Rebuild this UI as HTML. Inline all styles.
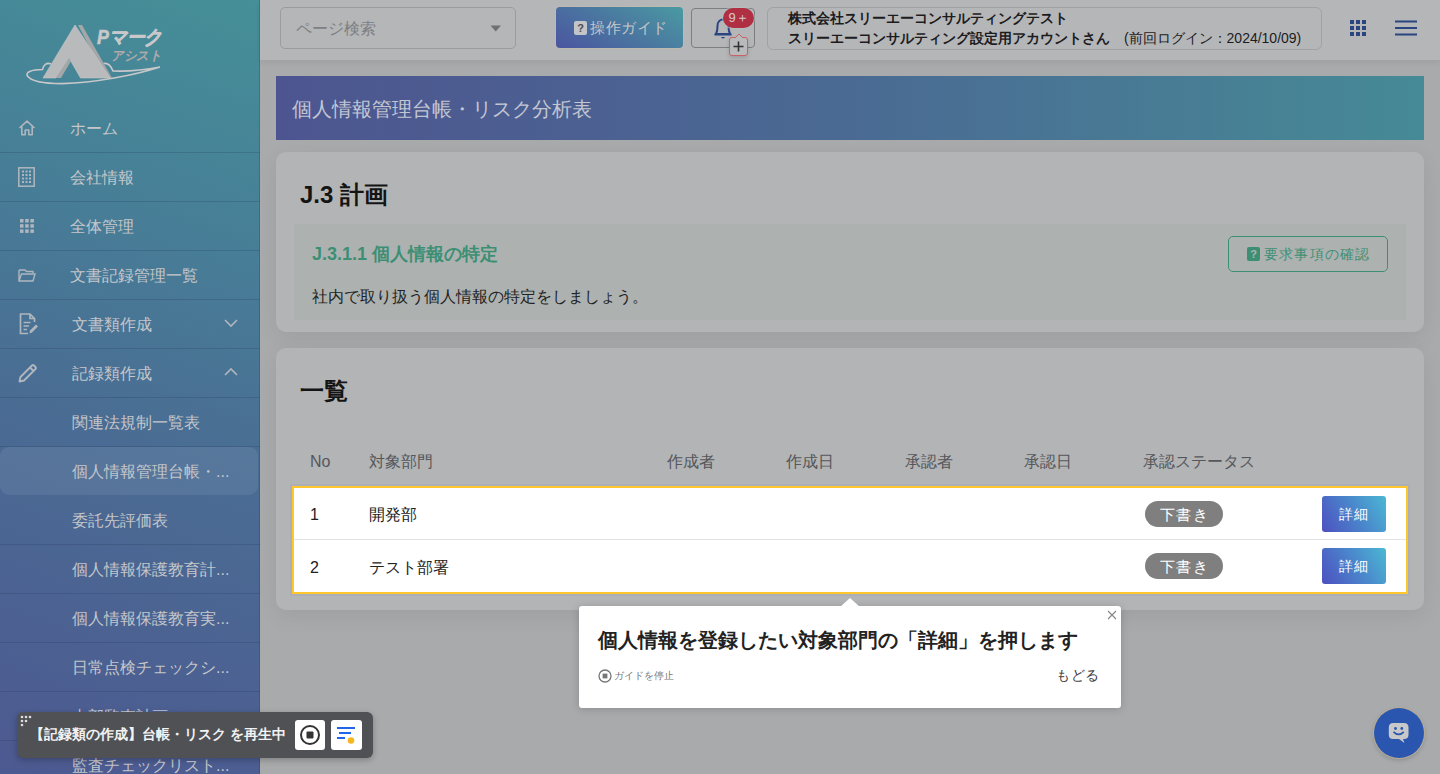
<!DOCTYPE html>
<html lang="ja"><head><meta charset="utf-8">
<style>
*{box-sizing:border-box;margin:0;padding:0}
html,body{width:1440px;height:774px;overflow:hidden}
body{font-family:"Liberation Sans",sans-serif;background:#a9aaac;position:relative;color:#222}
.abs{position:absolute}
#side{left:0;top:0;width:260px;height:774px;background:linear-gradient(200deg,#458f97 0%,#477f97 28%,#4a6c93 56%,#4d5991 100%);overflow:hidden;box-shadow:inset -1px 0 0 rgba(30,50,90,.25)}
.mi{position:absolute;left:0;width:260px;height:50px;border-bottom:1px solid rgba(30,50,80,.22);color:#c4c6ca;font-size:16px;line-height:49px}
.mi .t{position:absolute;left:70px;top:1px}
.mi .ic{position:absolute;left:18px;top:16px;width:18px;height:18px}
#hdr{left:260px;top:0;width:1180px;height:61px;background:#b5b6b8;border-bottom:1px solid #a2a3a5;box-shadow:0 2px 5px rgba(0,0,0,.06);z-index:2}
.card{position:absolute;left:276px;width:1148px;background:#b3b4b6;border-radius:10px;box-shadow:0 6px 22px rgba(0,0,0,.07)}
.th{top:452px;font-size:16px;color:#55575a;line-height:20px}
.td{font-size:16px;color:#222;line-height:20px}
.badge{width:78px;height:26px;border-radius:13px;background:#7f7f7f;color:#fff;font-size:15px;line-height:28px;text-align:center;letter-spacing:1.5px;text-indent:1px}
.btn{width:64px;height:36px;border-radius:3px;background:linear-gradient(60deg,#4d50c0 0%,#4a88cc 55%,#4bb8d2 100%);color:#fff;font-size:14px;line-height:36px;text-align:center;letter-spacing:1px}
</style></head><body>

<div id="side" class="abs">
  <!-- logo -->
  <svg class="abs" style="left:0;top:0" width="260" height="100" viewBox="0 0 260 100">
    <path d="M51 64 C47 62 43 65 42.5 69.5 C31 69.5 25 72.5 27.5 76 C31 81 45 83.6 62 83.6 C95 83 135 75 160 67 C145 70 125 71.5 113 71 C111 66 108 62.5 103.5 63.5" fill="none" stroke="#c8c8ca" stroke-width="1.6"/>
    <polygon points="78,25 82,25 112,78 106,78" fill="#a4a6a8"/>
    <polygon points="75,25 110,78 80.5,78 69,58 56,78 43,78" fill="#b9babc" stroke="#c6c7c9" stroke-width="0.6"/>
    <polygon points="56,78 69,58 71,61 61,78" fill="#a4a6a8"/>
    <text x="97" y="44" font-family="Liberation Sans" font-size="20" font-weight="bold" font-style="italic" fill="#c8c8ca" textLength="65" lengthAdjust="spacingAndGlyphs" stroke="#c8c8ca" stroke-width="0.6">Pマーク</text>
    <text x="111" y="59.5" font-family="Liberation Sans" font-size="13" font-weight="bold" font-style="italic" fill="#b2aaaa" textLength="50" lengthAdjust="spacingAndGlyphs">アシスト</text>
  </svg>

  <div class="mi" style="top:103px"><svg class="abs" style="left:18px;top:17px" width="18" height="16" viewBox="0 0 18 16"><path d="M1.5 8 L9 1.2 L16.5 8 M3.8 6 V14.8 H7.2 V10 H10.8 V14.8 H14.2 V6" fill="none" stroke="#b0b6be" stroke-width="1.6" stroke-linejoin="round"/></svg><span class="t">ホーム</span></div>
  <div class="mi" style="top:152px"><svg class="abs" style="left:18px;top:15px" width="17" height="20" viewBox="0 0 17 20"><rect x="0.8" y="0.8" width="15.4" height="18.4" fill="none" stroke="#b0b6be" stroke-width="1.5"/><g fill="#b0b6be"><rect x="4" y="3.5" width="2" height="2"/><rect x="7.5" y="3.5" width="2" height="2"/><rect x="11" y="3.5" width="2" height="2"/><rect x="4" y="7" width="2" height="2"/><rect x="7.5" y="7" width="2" height="2"/><rect x="11" y="7" width="2" height="2"/><rect x="4" y="10.5" width="2" height="2"/><rect x="7.5" y="10.5" width="2" height="2"/><rect x="11" y="10.5" width="2" height="2"/><rect x="4" y="14" width="2" height="2"/><rect x="7.5" y="14" width="2" height="2"/><rect x="11" y="14" width="2" height="2"/></g></svg><span class="t">会社情報</span></div>
  <div class="mi" style="top:201px"><svg class="ic" viewBox="0 0 18 18"><g fill="#b0b6be"><rect x="2" y="2" width="3.5" height="3.5"/><rect x="7.2" y="2" width="3.5" height="3.5"/><rect x="12.4" y="2" width="3.5" height="3.5"/><rect x="2" y="7.2" width="3.5" height="3.5"/><rect x="7.2" y="7.2" width="3.5" height="3.5"/><rect x="12.4" y="7.2" width="3.5" height="3.5"/><rect x="2" y="12.4" width="3.5" height="3.5"/><rect x="7.2" y="12.4" width="3.5" height="3.5"/><rect x="12.4" y="12.4" width="3.5" height="3.5"/></g></svg><span class="t">全体管理</span></div>
  <div class="mi" style="top:250px"><svg class="ic" viewBox="0 0 18 18"><path d="M1 4 H7 L8.5 5.5 H15 V7 M1 4 V15 H15 L17 8 H3.5 L1 15" fill="none" stroke="#b0b6be" stroke-width="1.4"/></svg><span class="t">文書記録管理一覧</span></div>
  <div class="mi" style="top:299px"><svg class="abs" style="left:19px;top:14px" width="20" height="22" viewBox="0 0 20 22"><path d="M9 20.5 H1.5 V1 H11 L15.5 5.5 V9 M11 1 V5.5 H15.5" fill="none" stroke="#b0b6be" stroke-width="1.7" stroke-linejoin="round"/><path d="M4.5 9.5 H11.5 M4.5 13 H10 M4.5 16.5 H8" stroke="#b0b6be" stroke-width="1.7"/><path d="M10.5 20.5 L11 17.5 L17 11.5 L19 13.5 L13 19.5 Z" fill="#b0b6be"/></svg><span class="t" style="left:72px">文書類作成</span><svg class="abs" style="left:224px;top:19px" width="14" height="10" viewBox="0 0 14 10"><path d="M1 2 L7 8 L13 2" fill="none" stroke="#b0b6be" stroke-width="1.6"/></svg></div>
  <div class="mi" style="top:348px"><svg class="abs" style="left:18px;top:15px" width="20" height="20" viewBox="0 0 20 20"><path d="M1.5 18.5 L2.5 14 L14 2.5 Q15 1.5 16 2.5 L17.5 4 Q18.5 5 17.5 6 L6 17.5 Z M12 4.5 L15.5 8" fill="none" stroke="#b0b6be" stroke-width="1.9" stroke-linejoin="round"/></svg><span class="t" style="left:72px">記録類作成</span><svg class="abs" style="left:224px;top:19px" width="14" height="10" viewBox="0 0 14 10"><path d="M1 8 L7 2 L13 8" fill="none" stroke="#b0b6be" stroke-width="1.6"/></svg></div>
  <div class="mi" style="top:397px"><span class="t" style="left:72px">関連法規制一覧表</span></div>
  <div class="abs" style="left:0;top:447px;width:258px;height:48px;border-radius:9px;background:rgba(255,255,255,.075)"></div>
  <div class="mi" style="top:446px;border-bottom:none"><span class="t" style="left:72px">個人情報管理台帳・...</span></div>
  <div class="mi" style="top:495px"><span class="t" style="left:72px">委託先評価表</span></div>
  <div class="mi" style="top:544px"><span class="t" style="left:72px">個人情報保護教育計...</span></div>
  <div class="mi" style="top:593px"><span class="t" style="left:72px">個人情報保護教育実...</span></div>
  <div class="mi" style="top:642px"><span class="t" style="left:72px">日常点検チェックシ...</span></div>
  <div class="mi" style="top:691px"><span class="t" style="left:72px">内部監査計画</span></div>
  <div class="mi" style="top:740px;border-bottom:none"><span class="t" style="left:72px">監査チェックリスト...</span></div>
</div>

<div id="hdr" class="abs">
  <div class="abs" style="left:20px;top:7px;width:236px;height:42px;border:1px solid #9a9c9f;border-radius:5px"></div>
  <div class="abs" style="left:36px;top:19px;font-size:16px;color:#7d7f83;line-height:20px">ページ検索</div>
  <svg class="abs" style="left:230px;top:25px" width="12" height="7" viewBox="0 0 12 7"><path d="M0.5 0.5 H11 L5.75 6.5Z" fill="#6e7074"/></svg>

  <div class="abs" style="left:296px;top:7px;width:127px;height:41px;border-radius:4px;background:linear-gradient(30deg,#4b55a0 0%,#4a7aa0 55%,#4a9aa2 100%);box-shadow:0 0 0 1px rgba(200,190,170,.5)"></div>
  <div class="abs" style="left:314px;top:21px;width:13px;height:14px;background:#c4c5c8;border-radius:2px;color:#4b4d52;font-size:11px;font-weight:bold;line-height:14px;text-align:center">?</div>
  <div class="abs" style="left:330px;top:18px;font-size:15px;color:#c4c6ca;letter-spacing:.6px;line-height:20px">操作ガイド</div>

  <div class="abs" style="left:431px;top:8px;width:64px;height:40px;border:1px solid #7c7e82;border-radius:4px"></div>
  <svg class="abs" style="left:453px;top:17px" width="20" height="23" viewBox="0 0 20 23"><path d="M3 17 C4 15 4.5 13 4.5 9 C4.5 5 7 2.5 10 2.5 C13 2.5 15.5 5 15.5 9 C15.5 13 16 15 17 17 Z" fill="none" stroke="#2a4682" stroke-width="2"/><path d="M1.5 17.5 H18.5" stroke="#2a4682" stroke-width="2"/><path d="M8 20 Q10 23 12 20" fill="#2a4682"/></svg>
  <div class="abs" style="left:463px;top:8px;width:31px;height:20px;border-radius:10px;background:#b02f42;color:#d8c8cc;font-size:13px;line-height:20px;text-align:center;box-shadow:0 0 0 1px rgba(180,200,200,.5)">9＋</div>
  <div class="abs" style="left:469px;top:37px;width:19px;height:19px;border:1px solid #c9606a;border-radius:3px;background:#b9babc;box-shadow:0 2px 4px rgba(0,0,0,.15)"></div><svg class="abs" style="left:474.5px;top:33px" width="8" height="6" viewBox="0 0 8 6"><path d="M0 5 L4 1 L8 5" fill="#b9babc" stroke="#c9606a" stroke-width="1"/><rect x="0.8" y="4.6" width="6.4" height="1.6" fill="#b9babc"/></svg>
  <svg class="abs" style="left:472px;top:40px" width="13" height="13" viewBox="0 0 13 13"><path d="M6.5 1.5 V11.5 M1.5 6.5 H11.5" stroke="#333" stroke-width="1.6"/></svg>

  <div class="abs" style="left:507px;top:7px;width:555px;height:43px;border:1px solid #a0a2a5;border-radius:6px"></div>
  <div class="abs" style="left:528px;top:8px;font-size:14px;font-weight:bold;color:#1c1c1e;line-height:20px;white-space:nowrap">株式会社スリーエーコンサルティングテスト<br>スリーエーコンサルティング設定用アカウントさん <span style="font-weight:normal;font-size:14px;margin-left:10px">(前回ログイン：2024/10/09)</span></div>

  <svg class="abs" style="left:1090px;top:20px" width="16" height="16" viewBox="0 0 16 16"><g fill="#2b4580"><rect x="0" y="0" width="4" height="4"/><rect x="6" y="0" width="4" height="4"/><rect x="12" y="0" width="4" height="4"/><rect x="0" y="6" width="4" height="4"/><rect x="6" y="6" width="4" height="4"/><rect x="12" y="6" width="4" height="4"/><rect x="0" y="12" width="4" height="4"/><rect x="6" y="12" width="4" height="4"/><rect x="12" y="12" width="4" height="4"/></g></svg>
  <svg class="abs" style="left:1135px;top:20px" width="22" height="16" viewBox="0 0 22 16"><g stroke="#2b4580" stroke-width="2.2"><path d="M0 1.5H22M0 8H22M0 14.5H22"/></g></svg>
</div>

<div class="abs" style="left:276px;top:76px;width:1148px;height:64px;background:linear-gradient(90deg,#4d5590 0%,#4a6a93 50%,#468a96 100%)"></div>
<div class="abs" style="left:292px;top:97px;font-size:20px;color:#c2c6d2;line-height:24px;letter-spacing:0px">個人情報管理台帳・リスク分析表</div>

<div class="card" style="top:152px;height:180px"></div>
<div class="abs" style="left:300px;top:181px;font-size:24px;font-weight:bold;color:#141414;line-height:28px">J.3 計画</div>
<div class="abs" style="left:294px;top:224px;width:1112px;height:96px;background:#adb2b1"></div>
<div class="abs" style="left:312px;top:243px;font-size:18px;font-weight:bold;color:#3d8f74;line-height:22px">J.3.1.1 個人情報の特定</div>
<div class="abs" style="left:312px;top:287px;font-size:16px;color:#222;line-height:20px">社内で取り扱う個人情報の特定をしましょう。</div>
<div class="abs" style="left:1228px;top:236px;width:160px;height:36px;border:1.5px solid #3d8f74;border-radius:5px"></div>
<div class="abs" style="left:1247px;top:247px;width:13px;height:14px;background:#3d8f74;border-radius:2px;color:#b0b4b3;font-size:11px;font-weight:bold;line-height:14px;text-align:center">?</div>
<div class="abs" style="left:1264px;top:245px;font-size:14px;color:#3d8f74;letter-spacing:1.2px;line-height:18px">要求事項の確認</div>

<div class="card" style="top:348px;height:262px"></div>
<div class="abs" style="left:300px;top:377px;font-size:24px;font-weight:bold;color:#141414;line-height:28px">一覧</div>
<div class="abs th" style="left:310px">No</div>
<div class="abs th" style="left:369px">対象部門</div>
<div class="abs th" style="left:667px">作成者</div>
<div class="abs th" style="left:786px">作成日</div>
<div class="abs th" style="left:905px">承認者</div>
<div class="abs th" style="left:1024px">承認日</div>
<div class="abs th" style="left:1143px">承認ステータス</div>

<div class="abs" style="left:292px;top:486px;width:1116px;height:108px;background:#fff;border:2px solid #fdc62a;box-shadow:0 0 0 2px rgba(150,160,185,.25)"></div>
<div class="abs" style="left:294px;top:539px;width:1112px;height:1px;background:#e2e2e2"></div>
<div class="abs td" style="left:310px;top:505px">1</div>
<div class="abs td" style="left:369px;top:505px">開発部</div>
<div class="abs td" style="left:310px;top:558px">2</div>
<div class="abs td" style="left:369px;top:558px">テスト部署</div>
<div class="abs badge" style="left:1145px;top:501px">下書き</div>
<div class="abs badge" style="left:1145px;top:553px">下書き</div>
<div class="abs btn" style="left:1322px;top:496px">詳細</div>
<div class="abs btn" style="left:1322px;top:548px">詳細</div>

<div class="abs" style="left:579px;top:606px;width:542px;height:102px;background:#fff;border-radius:3px;box-shadow:0 1px 8px rgba(0,0,0,.18)"></div>
<svg class="abs" style="left:840px;top:598px" width="20" height="9" viewBox="0 0 20 9"><path d="M0 9 L10 0 L20 9Z" fill="#fff"/></svg>
<svg class="abs" style="left:1107px;top:610px" width="10" height="10" viewBox="0 0 10 10"><path d="M1 1L9 9M9 1L1 9" stroke="#888" stroke-width="1.2"/></svg>
<div class="abs" style="left:598px;top:627px;font-size:20px;font-weight:bold;color:#222;line-height:26px;white-space:nowrap">個人情報を登録したい対象部門の「詳細」を押します</div>
<svg class="abs" style="left:598px;top:669px" width="14" height="14" viewBox="0 0 14 14"><circle cx="7" cy="7" r="6" fill="none" stroke="#777" stroke-width="1.3"/><rect x="4.6" y="4.6" width="4.8" height="4.8" fill="#777"/></svg>
<div class="abs" style="left:614px;top:669px;font-size:10px;color:#777;line-height:14px">ガイドを停止</div>
<div class="abs" style="left:1056px;top:666px;font-size:14px;color:#444;line-height:18px;letter-spacing:.5px">もどる</div>

<div class="abs" style="left:17px;top:712px;width:356px;height:46px;border-radius:6px;background:#505155;box-shadow:0 2px 6px rgba(0,0,0,.25)"></div>
<svg class="abs" style="left:20px;top:715px" width="13" height="13" viewBox="0 0 13 13"><g fill="#ddd"><circle cx="2" cy="2" r="1.3"/><circle cx="6" cy="2" r="1.3"/><circle cx="10" cy="2" r="1.3"/><circle cx="2" cy="6" r="1.3"/><circle cx="6" cy="6" r="1.3"/><circle cx="2" cy="10" r="1.3"/></g></svg>
<div class="abs" style="left:30px;top:725px;font-size:14px;font-weight:bold;color:#f2f2f2;line-height:18px;white-space:nowrap">【記録類の作成】台帳・リスク を再生中</div>
<div class="abs" style="left:295px;top:720px;width:30px;height:30px;border-radius:3px;background:#fff"></div>
<svg class="abs" style="left:299px;top:724px" width="22" height="22" viewBox="0 0 22 22"><circle cx="11" cy="11" r="9" fill="none" stroke="#333" stroke-width="2"/><rect x="7.5" y="7.5" width="7" height="7" rx="1" fill="#333"/></svg>
<div class="abs" style="left:331px;top:720px;width:31px;height:30px;border-radius:3px;background:#fff"></div>
<svg class="abs" style="left:336px;top:725px" width="22" height="22" viewBox="0 0 22 22"><g stroke="#1f66e8" stroke-width="2"><path d="M1 3H19M3 8H15M1 13H9"/></g><circle cx="15" cy="15.5" r="3.3" fill="#f5b820"/></svg>

<div class="abs" style="left:1374px;top:708px;width:50px;height:50px;border-radius:50%;background:#2a56b0;box-shadow:0 0 0 1px #b8ab95,0 2px 5px rgba(0,0,0,.2)"></div>
<svg class="abs" style="left:1388px;top:722px" width="22" height="23" viewBox="0 0 22 23"><path d="M5 1 H16 Q20.5 1 20.5 5.5 V12.5 Q20.5 17 16 17 H15 L16.5 21 L11 17 H5 Q0.8 17 0.8 12.5 V5.5 Q0.8 1 5 1Z" fill="#c8c8c8"/><circle cx="7.5" cy="6.5" r="1.4" fill="#2a56b0"/><circle cx="13.8" cy="6.5" r="1.4" fill="#2a56b0"/><path d="M5.5 9.8 Q10.7 15 15.8 9.8" fill="none" stroke="#2a56b0" stroke-width="1.7"/></svg>


</body></html>
